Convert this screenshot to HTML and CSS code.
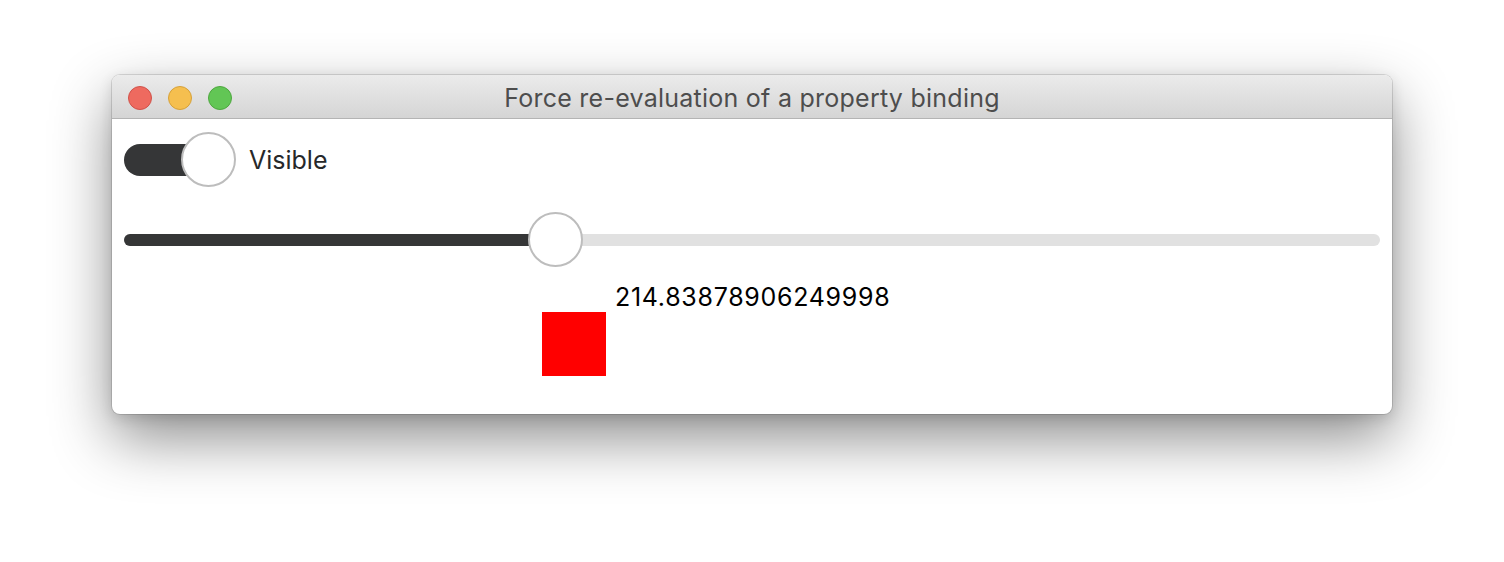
FILE: index.html
```html
<!DOCTYPE html>
<html>
<head>
<meta charset="utf-8">
<link rel="stylesheet" href="styles.css">
</head>
<body>
<div class="stage">
  <div class="window">
    <div class="titlebar">
      <div class="lights">
        <span class="light red"></span>
        <span class="light yellow"></span>
        <span class="light green"></span>
      </div>
      <div class="title">Force re-evaluation of a property binding</div>
    </div>
    <div class="content">
      <div class="switch-row">
        <div class="switch">
          <div class="switch-track"></div>
          <div class="switch-knob"></div>
        </div>
        <span class="switch-label">Visible</span>
      </div>
      <div class="slider">
        <div class="slider-track">
          <div class="slider-fill" style="width: 431px"></div>
        </div>
        <div class="slider-knob" style="left: 404px"></div>
      </div>
      <div class="result">
        <div class="value">214.83878906249998</div>
        <div class="square"></div>
      </div>
    </div>
  </div>
</div>
</body>
</html>
```
FILE: styles.css
```css
html, body {
  margin: 0;
  padding: 0;
  background: #ffffff;
}
body {
  width: 1504px;
  height: 562px;
  overflow: hidden;
  font-family: "Inter", "Liberation Sans", sans-serif;
}
.stage {
  padding: 75px 0 0 112px;
}
.window {
  width: 1280px;
  height: 339px;
  border-radius: 8px;
  background: #ffffff;
  box-shadow: 0 0 0 1px rgba(0,0,0,0.12), 0 24px 60px rgba(0,0,0,0.45), 0 4px 14px rgba(0,0,0,0.12);
  overflow: hidden;
  display: flex;
  flex-direction: column;
}
.titlebar {
  position: relative;
  height: 43px;
  flex: none;
  background: linear-gradient(#ebebeb, #d5d5d5);
  border-bottom: 1px solid #b4b4b4;
  display: flex;
  align-items: center;
  justify-content: center;
}
.lights {
  position: absolute;
  left: 16px;
  top: 11px;
  display: flex;
  gap: 16px;
}
.light {
  width: 22px;
  height: 22px;
  border-radius: 50%;
  display: block;
}
.red { background: #ee6a5f; border: 1px solid #d0524a; }
.yellow { background: #f5bf4f; border: 1px solid #d6a13a; }
.green { background: #62c655; border: 1px solid #4ea73f; }
.title {
  font-size: 25px;
  letter-spacing: 0.25px;
  color: #4d4d4d;
  margin-top: 2px;
}
.content {
  padding: 13px 12px 0 12px;
}
.switch-row {
  display: flex;
  align-items: center;
  gap: 13px;
  height: 55px;
}
.switch {
  position: relative;
  width: 112px;
  height: 55px;
}
.switch-track {
  position: absolute;
  left: 0;
  top: 12px;
  width: 100px;
  height: 32px;
  border-radius: 16px;
  background: #353637;
}
.switch-knob {
  position: absolute;
  right: 0;
  top: 0;
  width: 51px;
  height: 51px;
  border-radius: 50%;
  background: #ffffff;
  border: 2px solid #bdbdbd;
}
.switch-label {
  font-size: 25px;
  color: #26282a;
}
.slider {
  position: relative;
  margin-top: 25px;
  height: 55px;
  width: 1256px;
}
.slider-track {
  position: absolute;
  left: 0;
  right: 0;
  top: 22px;
  height: 12px;
  border-radius: 6px;
  background: #e1e1e1;
  overflow: hidden;
}
.slider-fill {
  height: 100%;
  background: #353637;
}
.slider-knob {
  position: absolute;
  top: 0;
  width: 51px;
  height: 51px;
  border-radius: 50%;
  background: #ffffff;
  border: 2px solid #bdbdbd;
}
.result {
  display: grid;
  grid-template-columns: 64px auto;
  column-gap: 9px;
  padding-left: 418px;
  margin-top: 15px;
}
.value {
  grid-column: 2;
  grid-row: 1;
  font-size: 25px;
  letter-spacing: 0.7px;
  line-height: 30px;
  color: #000000;
}
.square {
  grid-column: 1;
  grid-row: 2;
  width: 64px;
  height: 64px;
  background: #ff0000;
}
```
